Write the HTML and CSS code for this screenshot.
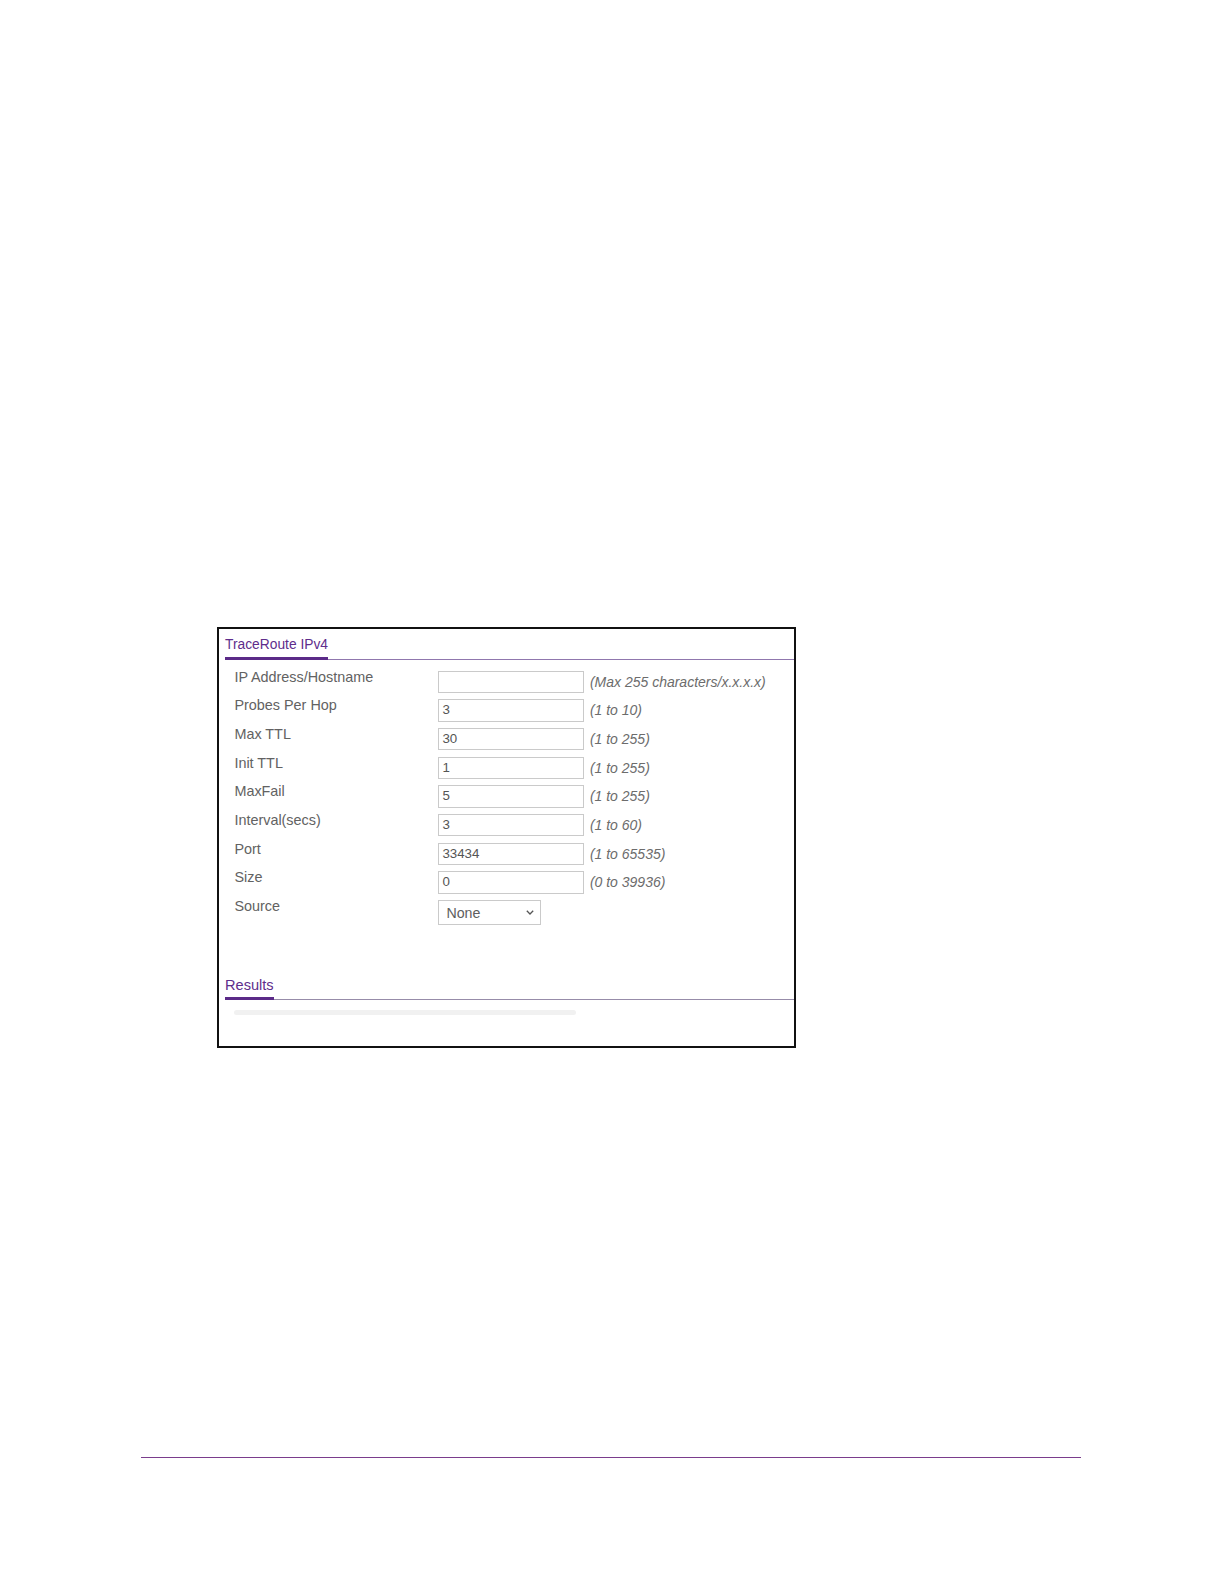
FILE: index.html
```html
<!DOCTYPE html>
<html>
<head>
<meta charset="utf-8">
<title>TraceRoute IPv4</title>
<link rel="stylesheet" href="styles.css">
</head>
<body>
<div class="page">
  <div class="frame">
    <div class="tabhead"><span class="tabtitle">TraceRoute IPv4</span></div>
    <div class="form">
      <div class="row"><span class="label">IP Address/Hostname</span><span class="field"></span><span class="hint">(Max 255 characters/x.x.x.x)</span></div>
      <div class="row"><span class="label">Probes Per Hop</span><span class="field">3</span><span class="hint">(1 to 10)</span></div>
      <div class="row"><span class="label">Max TTL</span><span class="field">30</span><span class="hint">(1 to 255)</span></div>
      <div class="row"><span class="label">Init TTL</span><span class="field">1</span><span class="hint">(1 to 255)</span></div>
      <div class="row"><span class="label">MaxFail</span><span class="field">5</span><span class="hint">(1 to 255)</span></div>
      <div class="row"><span class="label">Interval(secs)</span><span class="field">3</span><span class="hint">(1 to 60)</span></div>
      <div class="row"><span class="label">Port</span><span class="field">33434</span><span class="hint">(1 to 65535)</span></div>
      <div class="row"><span class="label">Size</span><span class="field">0</span><span class="hint">(0 to 39936)</span></div>
      <div class="row"><span class="label">Source</span><span class="select"><span>None</span><svg class="chev" width="8" height="5" viewBox="0 0 8 5"><polyline points="0.8,0.8 4,4 7.2,0.8" fill="none" stroke="#555" stroke-width="1.3"/></svg></span></div>
    </div>
    <div class="tabhead results"><span class="tabtitle">Results</span></div>
    <div class="bar"></div>
  </div>
  <div class="footer"></div>
</div>
</body>
</html>
```

FILE: styles.css
```css
html, body {
  margin: 0;
  padding: 0;
  background: #fff;
}
body {
  font-family: "Liberation Sans", Arial, sans-serif;
}
.page {
  padding-top: 627px;
}
.frame {
  margin-left: 217px;
  width: 579px;
  height: 421px;
  box-sizing: border-box;
  border: 2px solid #111;
}
.tabhead {
  margin-left: 6px;
  margin-top: 7.5px;
  display: flex;
  border-bottom: 1px solid #9077ae;
}
.tabhead.results {
  margin-top: 50.2px;
  border-bottom-color: #978ca9;
}
.tabtitle {
  font-size: 13.8px;
  line-height: 16px;
  color: #5e2d8c;
  padding-bottom: 4px;
  border-bottom: 3px solid #5b2a88;
  margin-bottom: -1px;
}
.results .tabtitle {
  font-size: 14.6px;
}
.form {
  padding-top: 9.3px;
  padding-left: 15.4px;
}
.row {
  display: flex;
  align-items: flex-start;
  height: 28.66px;
}
.label {
  width: 204px;
  font-size: 14.4px;
  line-height: 16px;
  color: #626262;
}
.field {
  margin-top: 2px;
  width: 145.5px;
  height: 22.2px;
  box-sizing: border-box;
  border: 1px solid #cacaca;
  font-size: 13.3px;
  line-height: 20px;
  padding-left: 3px;
  color: #555;
}
.hint {
  margin-top: 2px;
  margin-left: 6px;
  font-size: 14px;
  line-height: 22px;
  font-style: italic;
  color: #6c6c6c;
}
.select {
  margin-top: 2px;
  width: 103px;
  height: 25.3px;
  box-sizing: border-box;
  border: 1px solid #cacaca;
  display: flex;
  align-items: center;
  justify-content: space-between;
  padding: 0 6px 0 7px;
  font-size: 14.2px;
  color: #5e5e5e;
}
.chev {
  display: block;
}
.bar {
  margin-top: 10px;
  margin-left: 15.4px;
  width: 342px;
  height: 5px;
  border-radius: 3px;
  background: #f1f1f1;
}
.footer {
  margin-top: 408.7px;
  margin-left: 141px;
  width: 940px;
  border-top: 1px solid #7a3d8c;
}
```
